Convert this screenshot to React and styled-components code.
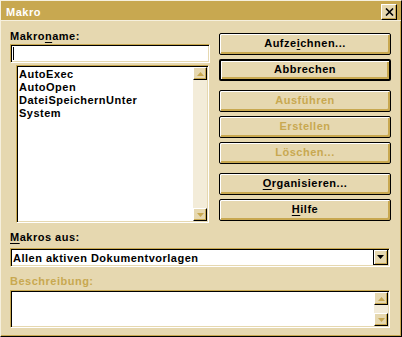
import React from "react";
import styled, { createGlobalStyle } from "styled-components";

const FACE = "#e6d8b0";
const GOLD = "#c8a850";
const TRACK = "#f3ecd9";
const LIGHT = "#f6f0de";

const Global = createGlobalStyle`
  html, body { margin: 0; padding: 0; background: ${FACE}; }
  * { box-sizing: border-box; }
`;

const Window = styled.div`
  width: 402px;
  height: 337px;
  background: ${FACE};
  border-style: solid;
  border-width: 1px 1px 1px 1px;
  border-color: ${LIGHT} #000 #000 ${LIGHT};
  box-shadow: inset -1px -1px 0 ${GOLD};
  display: flex;
  flex-direction: column;
  font-family: "Liberation Sans", Arial, sans-serif;
  font-weight: bold;
  font-size: 11px;
  letter-spacing: 0.5px;
  line-height: 13px;
  color: #000;
`;

const TitleBar = styled.div`
  height: 20px;
  background: ${GOLD};
  border-bottom: 1px solid ${LIGHT};
  display: flex;
  align-items: flex-start;
  justify-content: space-between;
  padding: 3px 4px 0 5px;
`;

const Title = styled.span`
  color: #fff;
  margin-top: 2px;
`;

const CloseButton = styled.div`
  width: 16px;
  height: 16px;
  background: ${FACE};
  border-style: solid;
  border-width: 1px;
  border-color: #fff #000 #000 #fff;
  box-shadow: inset -1px -1px 0 ${GOLD};
  display: flex;
  align-items: center;
  justify-content: center;
`;

const Body = styled.div`
  flex: 1;
  padding: 9px 10px 0 9px;
  display: flex;
  flex-direction: column;
`;

const Top = styled.div`
  display: grid;
  grid-template-columns: 200px 172px;
  column-gap: 9px;
`;

const LeftCol = styled.div`
  display: flex;
  flex-direction: column;
`;

const Label = styled.div`
  height: 13px;
  color: ${(p) => (p.$disabled ? GOLD : "#000")};
  margin-top: ${(p) => p.$mt || 0}px;
  u { text-decoration: underline; text-underline-offset: 2px; }
`;

const Sunken = styled.div`
  border-style: solid;
  border-width: 1px;
  border-color: ${GOLD} #fff #fff ${GOLD};
  background: #fff;
  box-shadow: inset 1px 1px 0 #000, inset -1px -1px 0 ${FACE};
  display: flex;
`;

const TextInput = styled(Sunken)`
  margin-top: 1px;
  height: 19px;
  width: 200px;
  padding: 2px 0 2px 2px;
`;

const Caret = styled.span`
  width: 1px;
  height: 13px;
  background: #000;
`;

const ListBox = styled(Sunken)`
  margin: 2px 0 0 6px;
  width: 193px;
  height: 158px;
  padding: 1px 1px 1px 1px;
`;

const Items = styled.ul`
  flex: 1;
  list-style: none;
  margin: 0;
  padding: 1px 0 0 1px;
`;

const Item = styled.li`
  height: 13px;
  white-space: nowrap;
`;

const VScroll = styled.div`
  width: 14px;
  display: flex;
  flex-direction: column;
  background: ${TRACK};
`;

const ScrollBtn = styled.div`
  height: ${(p) => p.$h || 13}px;
  background: ${FACE};
  border-style: solid;
  border-width: 1px;
  border-color: #fff #000 #000 #fff;
  box-shadow: inset -1px -1px 0 ${GOLD};
  display: flex;
  align-items: center;
  justify-content: center;
`;

const Track = styled.div`
  flex: 1;
`;

const ButtonCol = styled.div`
  padding-top: 3px;
  display: flex;
  flex-direction: column;
  gap: 9px;
`;

const ButtonGroup = styled.div`
  display: flex;
  flex-direction: column;
  gap: 4px;
`;

const Button = styled.div`
  height: 22px;
  width: 172px;
  background: ${FACE};
  border: ${(p) => (p.$default ? 2 : 1)}px solid #000;
  border-radius: 2px;
  box-shadow: inset 1px 1px 0 #fff, inset -2px -2px 0 ${GOLD};
  color: ${(p) => (p.$disabled ? GOLD : "#000")};
  display: flex;
  align-items: center;
  justify-content: center;
  padding-bottom: 1px;
  u { text-decoration: underline; text-underline-offset: 2px; }
`;

const Combo = styled(Sunken)`
  margin-top: 4px;
  width: 380px;
  height: 19px;
  padding: 1px;
`;

const ComboText = styled.div`
  flex: 1;
  padding: 2px 0 0 1px;
  white-space: nowrap;
`;

const ComboBtn = styled.div`
  width: 15px;
  background: ${FACE};
  border-left: 1px solid #000;
  border-right: 1px solid #000;
  border-bottom: 1px solid #000;
  box-shadow: inset 1px 1px 0 #fff, inset -1px -1px 0 ${GOLD};
  display: flex;
  align-items: center;
  justify-content: center;
`;

const DescBox = styled(Sunken)`
  margin-top: 2px;
  width: 380px;
  height: 38px;
  padding: 1px;
`;

const DescArea = styled.div`
  flex: 1;
`;

const Arrow = ({ dir = "up", color = GOLD }) => (
  <svg width="7" height="4" viewBox="0 0 7 4">
    {dir === "up" ? (
      <polygon points="3.5,0 7,4 0,4" fill={color} />
    ) : (
      <polygon points="0,0 7,0 3.5,4" fill={color} />
    )}
  </svg>
);

const Scrollbar = () => (
  <VScroll>
    <ScrollBtn>
      <Arrow dir="up" />
    </ScrollBtn>
    <Track />
    <ScrollBtn>
      <Arrow dir="down" />
    </ScrollBtn>
  </VScroll>
);

const macros = ["AutoExec", "AutoOpen", "DateiSpeichernUnter", "System"];

export default function App() {
  return (
    <>
      <Global />
      <Window>
        <TitleBar>
          <Title>Makro</Title>
          <CloseButton>
            <svg width="9" height="8" viewBox="0 0 9 8">
              <path d="M1 0.5 L8 7.5 M8 0.5 L1 7.5" stroke="#000" strokeWidth="1.6" />
            </svg>
          </CloseButton>
        </TitleBar>
        <Body>
          <Top>
            <LeftCol>
              <Label>
                Makro<u>n</u>ame:
              </Label>
              <TextInput>
                <Caret />
              </TextInput>
              <ListBox>
                <Items>
                  {macros.map((m) => (
                    <Item key={m}>{m}</Item>
                  ))}
                </Items>
                <Scrollbar />
              </ListBox>
            </LeftCol>
            <ButtonCol>
              <ButtonGroup>
                <Button>
                  Aufze<u>i</u>chnen...
                </Button>
                <Button $default>Abbrechen</Button>
              </ButtonGroup>
              <ButtonGroup>
                <Button $disabled>Ausführen</Button>
                <Button $disabled>Erstellen</Button>
                <Button $disabled>Löschen...</Button>
              </ButtonGroup>
              <ButtonGroup>
                <Button>
                  <span>
                    <u>O</u>rganisieren...
                  </span>
                </Button>
                <Button>
                  <span>
                    <u>H</u>ilfe
                  </span>
                </Button>
              </ButtonGroup>
            </ButtonCol>
          </Top>
          <Label $mt={8}>
            <u>M</u>akros aus:
          </Label>
          <Combo>
            <ComboText>Allen aktiven Dokumentvorlagen</ComboText>
            <ComboBtn>
              <Arrow dir="down" color="#000" />
            </ComboBtn>
          </Combo>
          <Label $mt={8} $disabled>
            Beschreibung:
          </Label>
          <DescBox>
            <DescArea />
            <Scrollbar />
          </DescBox>
        </Body>
      </Window>
    </>
  );
}
